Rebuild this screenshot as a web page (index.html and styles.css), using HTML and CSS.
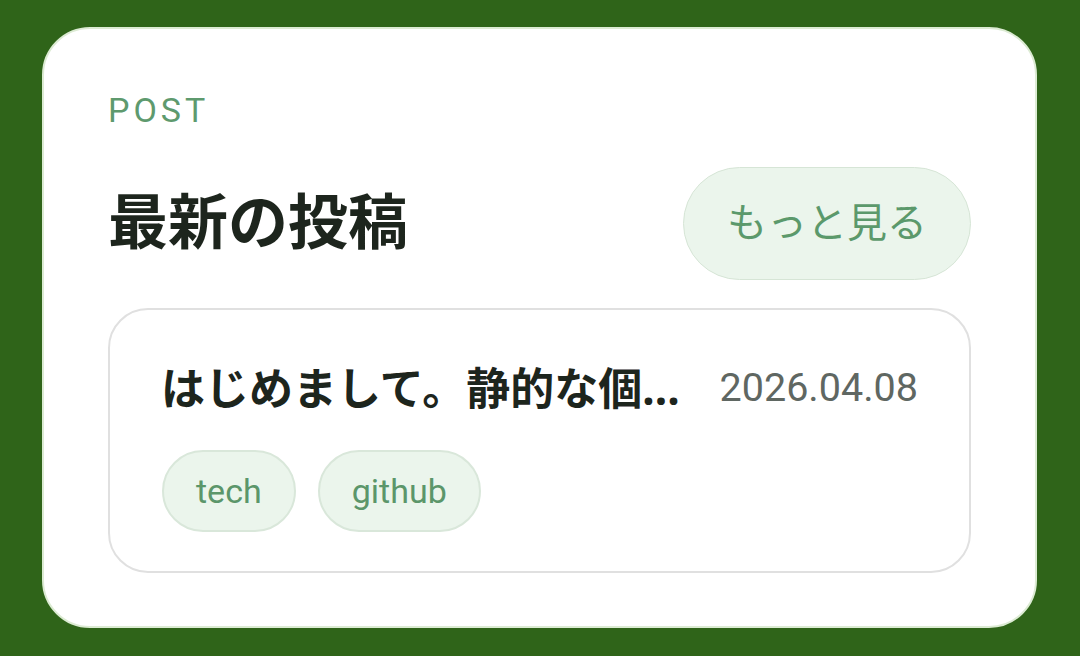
FILE: index.html
```html
<!DOCTYPE html>
<html lang="ja">
<head>
<meta charset="utf-8">
<title>最新の投稿</title>
<link rel="stylesheet" href="styles.css">
</head>
<body>
  <div class="page">
    <section class="card">
      <div class="eyebrow">POST</div>
      <div class="head-row">
        <h2 class="heading">最新の投稿</h2>
        <a class="more-btn" href="#">もっと見る</a>
      </div>
      <article class="post">
        <div class="post-top">
          <h3 class="post-title">はじめまして。静的な個人サイトをGitHub Pagesで公開しました</h3>
          <time class="post-date">2026.04.08</time>
        </div>
        <div class="tags">
          <span class="tag">tech</span>
          <span class="tag">github</span>
        </div>
      </article>
    </section>
  </div>
</body>
</html>
```

FILE: styles.css
```css
html, body {
  margin: 0;
  padding: 0;
}

body {
  background: #2f6419;
  width: 1080px;
  height: 656px;
  overflow: hidden;
}

.page {
  padding: 27px 43px 0 42px;
}

.card {
  background: #ffffff;
  border: 2px solid #dcebd3;
  border-radius: 48px;
  padding: 64px 64px 53px 64px;
}

.eyebrow {
  font-family: Roboto, "Noto Sans", sans-serif;
  font-size: 34px;
  line-height: 34px;
  letter-spacing: 4px;
  color: #5e9a6e;
}

.head-row {
  display: flex;
  align-items: center;
  justify-content: space-between;
  margin-top: 40px;
}

.heading {
  margin: 0;
  font-family: Roboto, "Noto Sans CJK JP", sans-serif;
  font-weight: 700;
  font-size: 60px;
  line-height: 1;
  color: #1d251d;
}

.more-btn {
  display: block;
  font-family: Roboto, "Noto Sans CJK JP", sans-serif;
  font-size: 40px;
  line-height: 57px;
  padding: 27px 43px;
  border: 1px solid #d6e5d6;
  border-radius: 999px;
  background: #ebf5ec;
  color: #5b996b;
  text-decoration: none;
}

.post {
  margin-top: 28px;
  border: 2px solid #e0e0e0;
  border-radius: 40px;
  padding: 48px 51px 39px 51px;
}

.post-top {
  display: flex;
  align-items: center;
  gap: 24px;
}

.post-title {
  flex: 1;
  min-width: 0;
  margin: 0;
  font-family: "Noto Sans", "Noto Sans CJK JP", sans-serif;
  font-weight: 700;
  font-size: 44px;
  line-height: 60px;
  color: #1d251d;
  white-space: nowrap;
  overflow: hidden;
  text-overflow: ellipsis;
}

.post-date {
  flex-shrink: 0;
  font-family: Roboto, "Noto Sans", sans-serif;
  font-size: 39.5px;
  line-height: 60px;
  color: #5f6762;
}

.tags {
  display: flex;
  gap: 22px;
  margin-top: 32px;
  padding-left: 1px;
}

.tag {
  font-family: Roboto, "Noto Sans", sans-serif;
  font-size: 34px;
  line-height: 46px;
  padding: 16px 32px;
  border: 2px solid #d9e7da;
  border-radius: 999px;
  background: #ebf5ec;
  color: #5b966a;
}
```
